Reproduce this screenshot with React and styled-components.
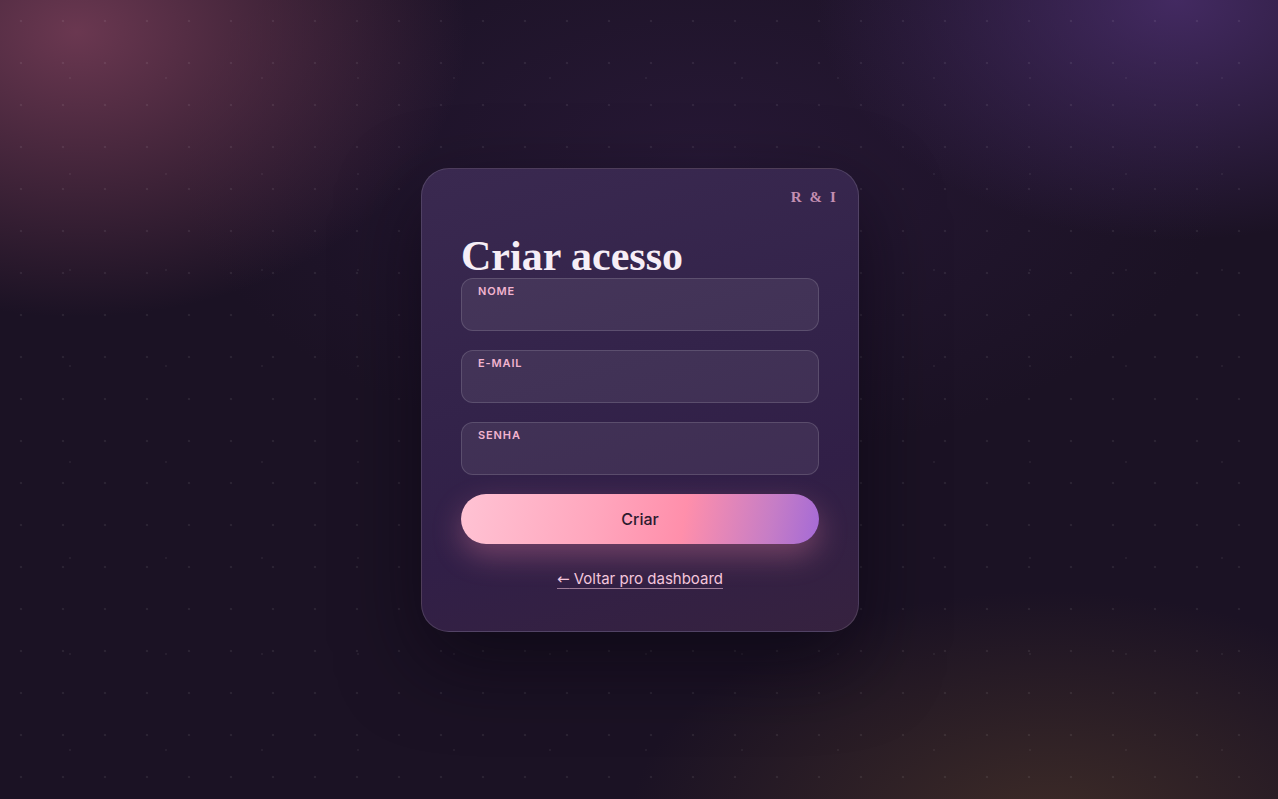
import React from 'react'
import styled, { createGlobalStyle } from 'styled-components'

const Global = createGlobalStyle`
  * { box-sizing: border-box; }
  html, body { margin: 0; padding: 0; }
  body {
    background: #1b1224;
    font-family: Inter, "Noto Sans", sans-serif;
  }
`

function Field({ label, type }) {
    return (
        <FieldBox>
            <FieldLabel>{label}</FieldLabel>
            <FieldInput type={type} />
        </FieldBox>
    )
}

export default function App() {
    return (
        <>
            <Global />
            <Page>
                <Card>
                    <Top>
                        <Brand>R &amp; I</Brand>
                    </Top>
                    <Title>Criar acesso</Title>
                    <Form>
                        <Field label="Nome" type="text" />
                        <Field label="E-mail" type="email" />
                        <Field label="Senha" type="password" />
                        <Submit>Criar</Submit>
                    </Form>
                    <Back href="#"><Arrow>←</Arrow> Voltar pro dashboard</Back>
                </Card>
            </Page>
        </>
    )
}

const Page = styled.div`
  min-height: 100vh;
  display: flex;
  align-items: center;
  justify-content: center;
  padding-left: 2px;
  background-color: #1b1224;
  background-image:
    radial-gradient(circle at 50% 50%, rgba(255,255,255,0.07) 1px, transparent 1.6px),
    radial-gradient(circle at 50% 50%, rgba(255,255,255,0.05) 1px, transparent 1.6px),
    radial-gradient(ellipse 520px 380px at 6% 4%, rgba(120,62,88,0.85), transparent 75%),
    radial-gradient(ellipse 480px 320px at 92% 0%, rgba(74,46,108,0.85), transparent 75%),
    radial-gradient(ellipse 560px 320px at 82% 104%, rgba(70,50,40,0.8), transparent 75%),
    radial-gradient(ellipse 700px 400px at 55% 20%, rgba(50,30,70,0.5), transparent 75%);
  background-size: 42px 42px, 96px 96px, auto, auto, auto, auto;
  background-position: 0 0, 22px 30px, 0 0, 0 0, 0 0, 0 0;
`

const Card = styled.div`
  width: 438px;
  padding: 20px 39px 42px;
  border-radius: 28px;
  border: 1px solid rgba(255,255,255,0.13);
  background: linear-gradient(165deg, #3a2950 0%, #33234a 45%, #311f47 70%, #36223f 100%);
  box-shadow: 0 30px 80px rgba(8,4,14,0.55);
  display: flex;
  flex-direction: column;
`

const Top = styled.div`
  display: flex;
  justify-content: flex-end;
  margin-right: -19px;
`

const Brand = styled.span`
  font-family: "Liberation Serif", serif;
  font-weight: 700;
  font-size: 15px;
  line-height: 16px;
  letter-spacing: 0.14em;
  color: #c48fb2;
`

const Title = styled.h1`
  margin: 30px 0 0;
  font-family: "Liberation Serif", "DejaVu Serif", serif;
  font-weight: 700;
  font-size: 42px;
  line-height: 43px;
  color: #f6eef6;
`

const Form = styled.div`
  display: flex;
  flex-direction: column;
  gap: 19px;
`

const FieldBox = styled.label`
  display: flex;
  flex-direction: column;
  height: 53px;
  padding: 5px 16px 0;
  border-radius: 12px;
  border: 1px solid rgba(255,255,255,0.14);
  background: rgba(255,255,255,0.07);
`

const FieldLabel = styled.span`
  font-size: 11px;
  font-weight: 600;
  line-height: 14px;
  letter-spacing: 0.08em;
  text-transform: uppercase;
  color: #f2b4cf;
`

const FieldInput = styled.input`
  flex: 1;
  border: 0;
  outline: none;
  background: transparent;
  color: #f6eef6;
  font: inherit;
  font-size: 15px;
  padding: 0;
`

const Submit = styled.button`
  height: 50px;
  border: 0;
  border-radius: 25px;
  background: linear-gradient(100deg, #ffc3d4 0%, #ffa6bd 38%, #ff8fab 62%, #c67dc6 86%, #a46ad6 100%);
  box-shadow: 0 12px 30px rgba(255,140,170,0.32);
  color: #2b1a2f;
  font-family: Inter, sans-serif;
  font-size: 16px;
  font-weight: 500;
  cursor: pointer;
`

const Back = styled.a`
  align-self: center;
  margin-top: 25px;
  font-size: 15px;
  line-height: 20px;
  color: #f4c6dc;
  text-decoration: underline;
  text-decoration-color: rgba(244,198,220,0.55);
  text-decoration-thickness: 1px;
  text-underline-offset: 4px;
`

const Arrow = styled.span`
  font-family: "DejaVu Sans", sans-serif;
  font-size: 15px;
`
